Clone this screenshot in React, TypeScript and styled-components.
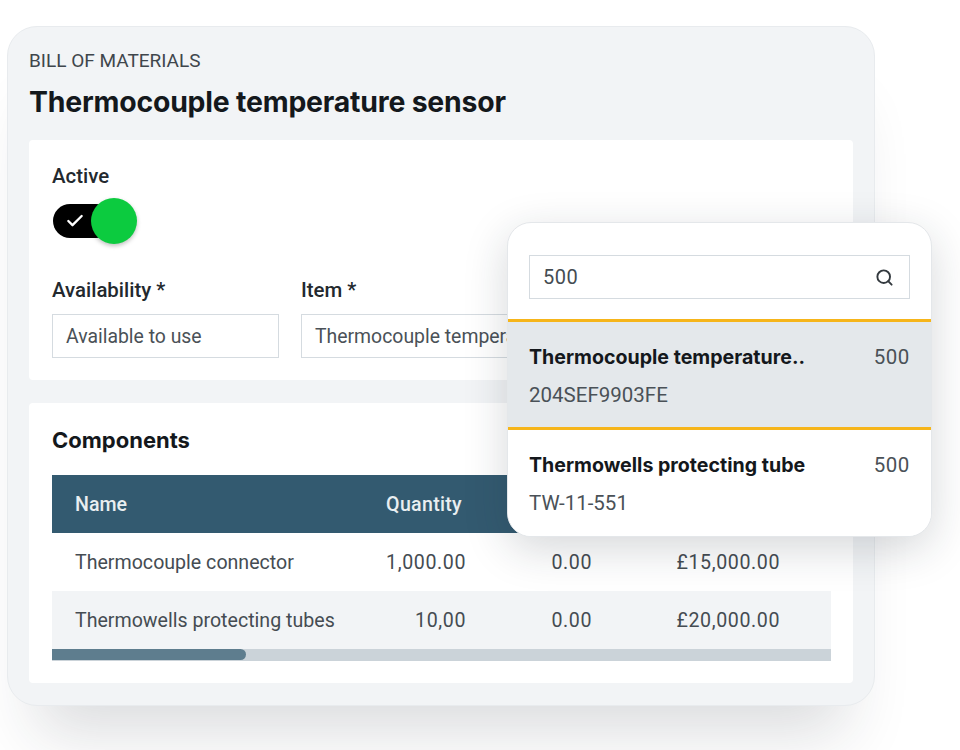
import React from "react";
import styled, { createGlobalStyle } from "styled-components";
import { Check, Search } from "lucide-react";

const Global = createGlobalStyle`
    html, body {
        margin: 0;
        background: #fff;
        height: 750px;
        overflow: hidden;
        font-family: 'Roboto', 'Liberation Sans', sans-serif;
    }
`

const Page = styled.div`
    padding: 26px 0 0 7px;
`

const Card = styled.div`
    position: relative;
    box-sizing: border-box;
    width: 868px;
    height: 680px;
    padding: 22px 21px 21px 21px;
    background: #f2f4f6;
    border: 1.5px solid #e8ebee;
    border-radius: 30px;
    box-shadow: 0 56px 60px -30px rgba(30, 40, 50, 0.16);
`

const Eyebrow = styled.div`
    font-size: 19px;
    line-height: 24px;
    color: #3f464c;
`

const Title = styled.h1`
    margin: 13px 0 0 0;
    font-family: 'Inter', sans-serif;
    font-weight: 700;
    font-size: 28.4px;
    line-height: 32px;
    letter-spacing: -0.2px;
    color: #14181c;
`

const Panel = styled.section<{ $height: number; $top: number; $pad: number }>`
    box-sizing: border-box;
    height: ${(p) => p.$height}px;
    margin-top: ${(p) => p.$top}px;
    padding: ${(p) => p.$pad}px 23px;
    background: #fff;
    border-radius: 4px;
`

const Label = styled.div`
    font-weight: 500;
    font-size: 20.4px;
    line-height: 24px;
    color: #23292e;
`

const Toggle = styled.div`
    position: relative;
    display: flex;
    align-items: center;
    box-sizing: border-box;
    width: 60px;
    height: 34px;
    margin: 16px 0 0 1px;
    padding-left: 12px;
    background: #000;
    border-radius: 17px;
    color: #fff;
`

const Knob = styled.span`
    position: absolute;
    left: 38px;
    top: -6px;
    width: 46px;
    height: 46px;
    border-radius: 50%;
    background: #0ccb3f;
    box-shadow: 0 2px 4px rgba(0, 0, 0, 0.25);
`

const Fields = styled.div`
    display: grid;
    grid-template-columns: 227px 1fr;
    column-gap: 22px;
    margin-top: 40px;
`

const Field = styled.div`
    display: flex;
    flex-direction: column;
    gap: 12px;
`

const Input = styled.div`
    box-sizing: border-box;
    height: 44px;
    padding: 0 13px;
    display: flex;
    align-items: center;
    border: 1.5px solid #d5dbe0;
    font-size: 19.4px;
    color: #4a5157;
    background: #fff;
`

const SectionTitle = styled.h2`
    margin: 0 0 21px 0;
    font-family: 'Inter', sans-serif;
    font-weight: 700;
    font-size: 22px;
    line-height: 28px;
    color: #14181c;
`

const Table = styled.div`
    width: 779px;
`

const Row = styled.div<{ $kind: "head" | "odd" | "even" }>`
    display: grid;
    grid-template-columns: 314px 100px 126px 188px 51px;
    align-items: center;
    height: 58px;
    font-size: 19.6px;
    background: ${(p) => (p.$kind === "head" ? "#335a70" : p.$kind === "even" ? "#f2f4f6" : "#fff")};
    color: ${(p) => (p.$kind === "head" ? "#e9eef1" : "#454c52")};
    font-weight: ${(p) => (p.$kind === "head" ? 500 : 400)};
`

const NameCell = styled.div`
    padding-left: 23px;
`

const NumCell = styled.div<{ $inset?: number }>`
    text-align: right;
    white-space: nowrap;
    letter-spacing: ${(p) => (p.$inset ? 0.3 : 0.6)}px;
    padding-right: ${(p) => p.$inset || 0}px;
`

const Scrollbar = styled.div`
    height: 12px;
    background: #cbd3d9;
`

const Thumb = styled.div`
    width: 194px;
    height: 11px;
    background: #5e7d8e;
    border-radius: 0 6px 6px 0;
`

const Popover = styled.div`
    position: absolute;
    left: 499px;
    top: 195px;
    box-sizing: border-box;
    width: 425px;
    height: 315px;
    padding-top: 32px;
    background: #fff;
    border: 1.5px solid #e4e7ea;
    border-radius: 24px;
    box-shadow: 0 12px 44px rgba(30, 40, 50, 0.18);
    overflow: hidden;
`

const SearchBox = styled.div`
    display: flex;
    align-items: center;
    justify-content: space-between;
    box-sizing: border-box;
    height: 44px;
    margin: 0 21px 20px 21px;
    padding: 0 15px 0 13px;
    border: 1.5px solid #d5dbe0;
    font-size: 20px;
    letter-spacing: 0.5px;
    color: #454c52;
`

const Result = styled.div<{ $selected?: boolean }>`
    box-sizing: border-box;
    height: ${(p) => (p.$selected ? 111 : 108)}px;
    padding: 22px 21px 0 21px;
    background: ${(p) => (p.$selected ? "#e4e8eb" : "#fff")};
    border-top: ${(p) => (p.$selected ? "3px solid #f6b51a" : "none")};
    border-bottom: ${(p) => (p.$selected ? "3px solid #f6b51a" : "none")};
`

const ResultTop = styled.div`
    display: flex;
    justify-content: space-between;
    align-items: center;
    height: 26px;
`

const ResultName = styled.div`
    font-family: 'Inter', sans-serif;
    font-weight: 700;
    font-size: 19.6px;
    color: #14181c;
`

const ResultQty = styled.div`
    font-size: 20.5px;
    letter-spacing: 0.6px;
    color: #4a5157;
`

const ResultCode = styled.div`
    margin-top: 12px;
    font-size: 20.5px;
    line-height: 26px;
    color: #4a5157;
`

const rows = [
    { name: "Thermocouple connector", qty: "1,000.00", other: "0.00", total: "£15,000.00" },
    { name: "Thermowells protecting tubes", qty: "10,00", other: "0.00", total: "£20,000.00" },
]

const results = [
    { name: "Thermocouple temperature..", code: "204SEF9903FE", selected: true },
    { name: "Thermowells protecting tube", code: "TW-11-551", selected: false },
]

const App = () => {
    return <Page>
        <Global />
        <Card>
            <Eyebrow>BILL OF MATERIALS</Eyebrow>
            <Title>Thermocouple temperature sensor</Title>
            <Panel $height={240} $top={22} $pad={24}>
                <Label>Active</Label>
                <Toggle>
                    <Check size={20} strokeWidth={2.8} />
                    <Knob />
                </Toggle>
                <Fields>
                    <Field>
                        <Label>Availability *</Label>
                        <Input>Available to use</Input>
                    </Field>
                    <Field>
                        <Label>Item *</Label>
                        <Input>Thermocouple temperature sensor</Input>
                    </Field>
                </Fields>
            </Panel>
            <Panel $height={280} $top={23} $pad={23}>
                <SectionTitle>Components</SectionTitle>
                <Table>
                    <Row $kind="head">
                        <NameCell>Name</NameCell>
                        <NumCell $inset={4}>Quantity</NumCell>
                    </Row>
                    {rows.map((r, i) => (
                        <Row key={r.name} $kind={i % 2 ? "even" : "odd"}>
                            <NameCell>{r.name}</NameCell>
                            <NumCell>{r.qty}</NumCell>
                            <NumCell>{r.other}</NumCell>
                            <NumCell>{r.total}</NumCell>
                        </Row>
                    ))}
                    <Scrollbar><Thumb /></Scrollbar>
                </Table>
            </Panel>
            <Popover>
                <SearchBox>
                    500
                    <Search size={19} strokeWidth={2.4} color="#33393e" />
                </SearchBox>
                {results.map((r) => (
                    <Result key={r.code} $selected={r.selected}>
                        <ResultTop>
                            <ResultName>{r.name}</ResultName>
                            <ResultQty>500</ResultQty>
                        </ResultTop>
                        <ResultCode>{r.code}</ResultCode>
                    </Result>
                ))}
            </Popover>
        </Card>
    </Page>
}

export default App
